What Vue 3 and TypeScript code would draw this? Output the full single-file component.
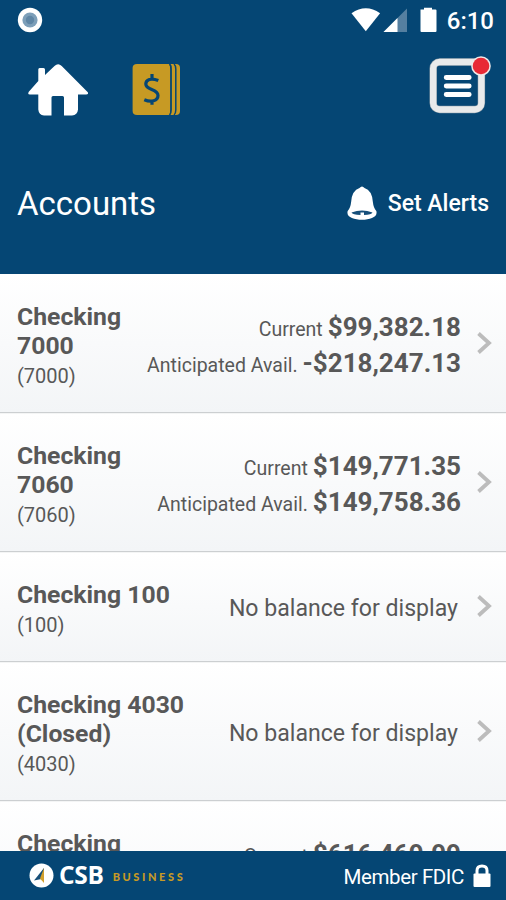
<script setup lang="ts">
interface Account {
  name: string[]
  id?: string
  current?: string
  available?: string
}

const accounts: Account[] = [
  { name: ['Checking', '7000'], id: '7000', current: '$99,382.18', available: '-$218,247.13' },
  { name: ['Checking', '7060'], id: '7060', current: '$149,771.35', available: '$149,758.36' },
  { name: ['Checking 100'], id: '100' },
  { name: ['Checking 4030', '(Closed)'], id: '4030' },
  { name: ['Checking'], current: '$616,469.99' },
]
</script>

<template>
  <div class="screen">
    <header class="header">
      <div class="status">
        <svg class="record" width="26" height="26" viewBox="0 0 26 26">
          <circle cx="13" cy="13" r="12.2" fill="#fff" />
          <circle cx="13" cy="13" r="7.6" fill="#7d9fb9" />
          <circle cx="13" cy="13" r="4.2" fill="#5f86a5" />
        </svg>
        <div class="signals">
          <svg width="88" height="26" viewBox="0 0 88 26">
            <path d="M1.500 6.200Q15.800-3.600 30.100 6.200L15.800 24.300Z" fill="#fff" />
            <path d="M57 1.500V25H33.500Z" fill="#557fa0" />
            <path d="M47.500 11V25H33.500Z" fill="#fff" />
            <path d="M70.500 2.500H74V.7H82V2.500H85.500Q86.500 2.500 86.500 3.500V24Q86.500 25 85.500 25H71.500Q70.500 25 70.500 24Z" fill="#fff" />
          </svg>
          <span class="time">6:10</span>
        </div>
      </div>
      <nav class="tools">
        <svg width="60" height="53" viewBox="0 0 60 53">
          <path d="M10.300 18V6.500Q10.300 5 11.600 5H15.500Q17 5 17 6.500V12L26.500 3Q30.200-.5 33.700 3L59.800 29.300Q60.800 31.500 58 31.500H50V46.500Q49.500 52 44 52.500H36V34.500Q36 33 34.500 33H25Q23.500 33 23.500 34.500V52.500H16Q10.800 52 10.300 46.500V31.500H2Q-.8 31.500.8 28.800Z" fill="#fff" />
        </svg>
        <svg class="money" width="49" height="53" viewBox="0 0 49 53">
          <rect x="6" y="1" width="42" height="51" rx="4" fill="#c79a24" />
          <path d="M42 1Q43.800 2.500 43.800 6V47Q43.800 50.500 42 52" fill="none" stroke="#054674" stroke-width="1.500" />
          <path d="M37.500 1Q39 2.500 39 6V47Q39 50.500 37.500 52" fill="none" stroke="#054674" stroke-width="1.800" />
          <path d="M5 1H33.500Q38 1 38 5V48Q38 52 33.500 52H5Q.6 52 .6 48V5Q.6 1 5 1Z" fill="#c79a24" />
          <path d="M26.300 17.500C19 14.500 13.800 16.500 13.800 21C13.800 27.500 26 25.500 26 32.500C26 38 19 39.600 12.300 36.700M20 11V16M20 37.500V41.800" fill="none" stroke="#054674" stroke-width="3.200" />
        </svg>
        <svg class="menu" width="62" height="60" viewBox="0 0 62 60">
          <rect x="4.200" y="6" width="48.200" height="47.500" rx="6.500" fill="none" stroke="#8799a6" stroke-width="7.400" />
          <rect x="4.200" y="6" width="48.200" height="47.500" rx="6.500" fill="none" stroke="#e9eaeb" stroke-width="6.400" />
          <path d="M17.200 21.500H40.200M17.200 30H40.200M17.200 38.500H40.200" stroke="#fff" stroke-width="4.800" stroke-linecap="round" />
          <circle cx="52" cy="10" r="9.800" fill="#efe9e9" />
          <circle cx="52" cy="10" r="8.300" fill="#e82935" />
        </svg>
      </nav>
      <div class="title-bar">
        <h1>Accounts</h1>
        <button class="alerts">
          <svg width="32" height="34" viewBox="0 0 32 34">
            <path d="M13.500 2Q16 -1 18.500 2Q26 4.500 26.800 15.500Q27.500 22 30.300 25C32.200 31 24 33.700 16 33.700S-.2 31 1.700 25Q4.500 22 5.200 15.500Q6 4.500 13.500 2Z" fill="#fff" />
            <path d="M5.500 26.500Q16 22.500 26.500 26.500Q25.500 28.600 18 29V26.400H14.500V29Q6.500 28.600 5.500 26.500Z" fill="#164f7a" />
          </svg>
          <span>Set Alerts</span>
        </button>
      </div>
    </header>

    <main class="list">
      <section v-for="(account, index) in accounts" :key="index" class="row">
        <div class="identity" :class="{ tall: account.current }">
          <h2><span v-for="line in account.name" :key="line">{{ line }}</span></h2>
          <p v-if="account.id">({{ account.id }})</p>
        </div>
        <div v-if="account.current" class="balances">
          <div class="balance"><span class="label">Current</span><strong>{{ account.current }}</strong></div>
          <div v-if="account.available" class="balance"><span class="label">Anticipated Avail.</span><strong>{{ account.available }}</strong></div>
        </div>
        <div v-else class="empty">No balance for display</div>
        <svg class="chevron" width="17" height="24" viewBox="0 0 17 24">
          <path d="M2.500 2.500L13 12L2.500 21.500" fill="none" stroke="#bcbcbc" stroke-width="3.800" />
        </svg>
      </section>
    </main>

    <footer class="footer">
      <div class="brand">
        <svg width="25" height="25" viewBox="0 0 25 25">
          <circle cx="12.500" cy="12.500" r="12" fill="#fff" />
          <path d="M15 5V15.500L5 17.500Z" fill="#174f78" />
          <path d="M15 5V20L11 15.500Z" fill="#d3a02c" />
        </svg>
        <span class="csb">CSB</span>
        <span class="business">BUSINESS</span>
      </div>
      <div class="member">
        <span>Member FDIC</span>
        <svg width="18" height="24" viewBox="0 0 18 24">
          <path d="M4 11V6.500Q4 2 9 2T14 6.500V11" fill="none" stroke="#fff" stroke-width="3" />
          <rect x=".5" y="9.500" width="17" height="13.500" rx="1" fill="#fff" />
        </svg>
      </div>
    </footer>
  </div>
</template>

<style>
body {
  margin: 0;
}
</style>

<style scoped>
.screen {
  width: 506px;
  height: 900px;
  display: flex;
  flex-direction: column;
  overflow: hidden;
  font-family: Roboto, 'Liberation Sans', sans-serif;
  color: #585858;
  background: #fff;
}
.header {
  flex: none;
  height: 274px;
  box-sizing: border-box;
  background: #054674;
  color: #fff;
}
.status {
  height: 41px;
  display: flex;
  justify-content: space-between;
  padding: 7px 12px 0 17px;
  box-sizing: border-box;
}
.signals {
  display: flex;
  gap: 9px;
}
.time {
  font-size: 24px;
  font-weight: 500;
  line-height: 28px;
}
.tools {
  height: 94px;
  display: flex;
  align-items: flex-start;
  padding: 22px 15px 0 28px;
  box-sizing: border-box;
}
.money {
  margin-left: 44px;
}
.menu {
  margin: -7px 0 0 auto;
}
.title-bar {
  height: 137px;
  display: flex;
  align-items: center;
  justify-content: space-between;
  padding: 0 17px;
}
h1 {
  margin: 0;
  font-size: 33px;
  font-weight: 400;
  line-height: 40px;
}
.alerts {
  display: flex;
  align-items: center;
  gap: 10px;
  padding: 0;
  border: 0;
  background: none;
  color: #fff;
  font: 500 23px/28px Roboto, sans-serif;
}
.alerts svg {
  margin-top: -2px;
}
.list {
  flex: 1;
  min-height: 0;
  overflow: hidden;
}
.row {
  display: flex;
  align-items: center;
  box-sizing: border-box;
  padding: 28px 13px 22px 17px;
  border-bottom: 1px solid #cccfd1;
  background: linear-gradient(#fff, #f3f5f7);
}
.row + .row {
  border-top: 1px solid #f4f5f5;
}
.row:first-child {
  padding-top: 29px;
}
.identity {
  flex: 1;
}
.identity.tall {
  min-height: 87px;
}
h2 {
  margin: -1px 0 0;
  font-size: 24.75px;
  font-weight: 700;
  line-height: 29px;
}
h2 span {
  display: block;
}
.identity p {
  margin: 2px 0 0;
  font-size: 20px;
  line-height: 28px;
}
.balances {
  min-height: 72px;
  margin: -4px 15px 0 0;
}
.balance {
  height: 36px;
  display: flex;
  justify-content: flex-end;
  align-items: baseline;
  gap: 5px;
  line-height: 36px;
}
.label {
  font-size: 19.5px;
}
.balance strong {
  font-size: 26px;
  font-weight: 700;
}
.empty {
  margin: -2px 18px 0 0;
  font-size: 23.1px;
  line-height: 28px;
}
.chevron {
  margin-top: -8px;
}
.footer {
  flex: none;
  height: 49px;
  display: flex;
  align-items: center;
  justify-content: space-between;
  box-sizing: border-box;
  padding: 0 15px 0 29px;
  background: #054674;
  color: #fff;
}
.brand,
.member {
  display: flex;
  align-items: center;
}
.csb {
  margin: -1px 0 0 5px;
  font: 700 24.5px/28px 'Open Sans', sans-serif;
  letter-spacing: -0.3px;
}
.business {
  margin: 3px 0 0 9px;
  color: #c79a24;
  font: 900 11px/14px Lato, sans-serif;
  letter-spacing: 2.6px;
}
.member {
  gap: 9px;
  font-size: 20.5px;
  line-height: 28px;
  letter-spacing: -0.4px;
}
.member span {
  margin-top: 2px;
}
</style>
